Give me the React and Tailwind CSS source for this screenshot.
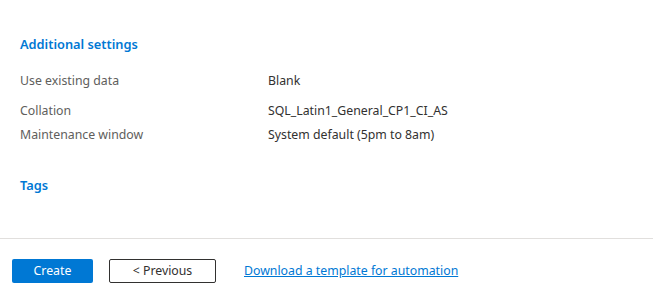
const rows = [
  ["Use existing data", "Blank"],
  ["Collation", "SQL_Latin1_General_CP1_CI_AS"],
  ["Maintenance window", "System default (5pm to 8am)"],
];

export default function App() {
  return (
    <div
      className="w-[653px] h-[288px] bg-white flex flex-col text-[12.3px] text-[#323130]"
      style={{ fontFamily: '"Noto Sans", "Open Sans", sans-serif' }}
    >
      <div className="flex-1 px-5 pt-[34px]">
        <h2 className="text-[12.8px] font-semibold text-[#0078d4] leading-5">Additional settings</h2>
        <div className="mt-[19px] flex flex-col">
          {rows.map(([label, value], i) => (
            <div
              key={label}
              className={`flex leading-4 ${i === 0 ? "" : i === 1 ? "mt-[14px]" : "mt-2"}`}
            >
              <div className="w-[248px] text-[#605e5c]">{label}</div>
              <div>{value}</div>
            </div>
          ))}
        </div>
        <h2 className="mt-[32px] text-[12.8px] font-semibold text-[#0078d4] leading-5">Tags</h2>
      </div>
      <div className="border-t border-[#e1dfdd] h-[50px] flex items-start px-3 pt-[20px]">
        <button className="w-[81px] h-6 bg-[#0078d4] text-white text-[12.3px] rounded-[2px]">Create</button>
        <button className="ml-4 w-[107px] h-6 border border-[#323130] rounded-[2px] text-[12.3px] text-[#323130]">
          &lt; Previous
        </button>
        <a href="#" className="ml-7 mt-[3px] text-[#0078d4] underline text-[12.3px]">
          Download a template for automation
        </a>
      </div>
    </div>
  );
}
